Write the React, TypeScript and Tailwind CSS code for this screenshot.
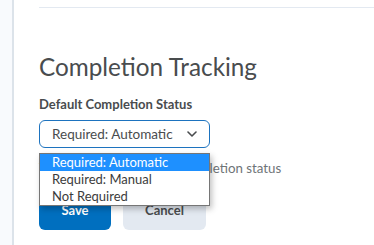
const options = ["Required: Automatic", "Required: Manual", "Not Required"];

export default function App() {
  return (
    <div className="flex h-[245px] w-[374px] overflow-hidden bg-white text-[#494c4e]" style={{ fontFamily: "Lato, 'Open Sans', sans-serif" }}>
      {/* Sidebar edge */}
      <div className="w-[14px] shrink-0 border-r-2 border-[#dce3ea] bg-[#f8fafd]" />

      {/* Main */}
      <div className="relative flex-1 pl-[25px]">
        <div className="mt-[7px] h-px bg-[#e3e9f1]" />

        <h2 className="mt-[44px] text-[24.3px] leading-[30px] font-normal text-[#494c4e]">Completion Tracking</h2>

        <label className="mt-[14px] block text-[13px] leading-[16px] font-bold">Default Completion Status</label>

        <div className="relative mt-[8px] w-[171px]">
          <div className="flex h-[28px] items-center justify-between rounded-[6px] border border-[#1d73bf] pl-[12px] pr-[12px] text-[13.5px]">
            <span>Required: Automatic</span>
            <svg width="10" height="6" viewBox="0 0 10 6" fill="none" stroke="#494c4e" strokeWidth="1.6" strokeLinecap="round" strokeLinejoin="round">
              <polyline points="1,1 5,5 9,1" />
            </svg>
          </div>

          {/* Open dropdown list */}
          <ul className="absolute top-[33px] left-0 z-10 w-[171px] border border-[#767676] bg-white text-[13px] leading-[17px] text-[#3b3b3b] shadow-[2px_3px_6px_rgba(0,0,0,0.25)]">
            {options.map((o, i) => (
              <li key={o} className={`pl-[12px] ${i === 0 ? "bg-[#1e90ff] text-white" : ""}`}>
                {o}
              </li>
            ))}
          </ul>
        </div>

        <p className="mt-[12px] text-[13.3px] leading-[16px] text-[#6e7477]">This will set the default completion status</p>

        <div className="mt-[16px] flex gap-[12px]">
          <button className="h-[38px] w-[72px] rounded-[6px] bg-[#006fbf] text-[13px] font-bold text-white">Save</button>
          <button className="h-[38px] w-[83px] rounded-[6px] bg-[#e3e9f1] text-[13px] font-bold text-[#494c4e]">Cancel</button>
        </div>
      </div>
    </div>
  );
}
